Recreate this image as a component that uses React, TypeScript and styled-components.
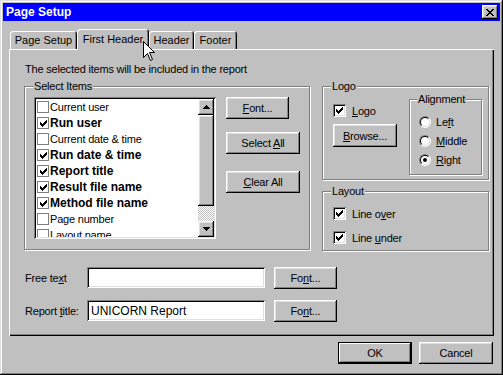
import React from "react";
import styled, { createGlobalStyle } from "styled-components";

const GlobalStyle = createGlobalStyle`
  html, body {
    margin: 0;
    padding: 0;
    background: #c0c0c0;
  }
  body {
    font-family: "Liberation Sans", Arial, sans-serif;
    font-size: 11px;
    letter-spacing: -0.2px;
    color: #000;
  }
  * {
    box-sizing: border-box;
  }
`;

const raised =
  "inset -1px -1px #000, inset 1px 1px #fff, inset -2px -2px #808080, inset 2px 2px #dfdfdf";
const sunken =
  "inset 1px 1px #808080, inset -1px -1px #fff, inset 2px 2px #000, inset -2px -2px #dfdfdf";

const items = [
  { label: "Current user", checked: false },
  { label: "Run user", checked: true },
  { label: "Current date & time", checked: false },
  { label: "Run date & time", checked: true },
  { label: "Report title", checked: true },
  { label: "Result file name", checked: true },
  { label: "Method file name", checked: true },
  { label: "Page number", checked: false },
  { label: "Layout name", checked: false },
];

const CheckMark = () => (
  <svg width="7" height="7" viewBox="0 0 7 7" shapeRendering="crispEdges">
    <path
      d="M6 0h1v1h-1z M5 1h2v1h-2z M0 2h1v1h-1z M4 2h3v1h-3z M0 3h2v1h-2z M3 3h3v1h-3z M0 4h5v1h-5z M1 5h3v1h-3z M2 6h1v1h-1z"
      fill="#000"
    />
  </svg>
);

const Arrow = ({ down }: { down?: boolean }) => (
  <svg width="7" height="4" viewBox="0 0 7 4" shapeRendering="crispEdges">
    <polygon points={down ? "0,0 7,0 3.5,4" : "3.5,0 7,4 0,4"} fill="#000" />
  </svg>
);

const App = () => {
  return (
    <>
      <GlobalStyle />
      <Window>
        <TitleBar>
          <span>Page Setup</span>
          <CloseButton>
            <svg width="8" height="7" viewBox="0 0 8 7" shapeRendering="crispEdges">
              <path
                d="M0 0h2v1h-2z M6 0h2v1h-2z M1 1h2v1h-2z M5 1h2v1h-2z M2 2h4v1h-4z M3 3h2v1h-2z M2 4h4v1h-4z M1 5h2v1h-2z M5 5h2v1h-2z M0 6h2v1h-2z M6 6h2v1h-2z"
                fill="#000"
              />
            </svg>
          </CloseButton>
        </TitleBar>

        <Body>
          <TabStrip>
            <Tab $w={67}>Page Setup</Tab>
            <Tab $w={72} $active>
              First Header
            </Tab>
            <Tab $w={45}>Header</Tab>
            <Tab $w={43}>Footer</Tab>
          </TabStrip>

          <Panel>
            <Intro>The selected items will be included in the report</Intro>

            <MainRow>
              <Group $w={286} $h={164} $pad="0 9px">
                <GroupLabel $ml={-1}>Select Items</GroupLabel>
                <ListRow>
                  <ListBox>
                    <ListItems>
                      {items.map((it) => (
                        <ListItem key={it.label} $checked={it.checked}>
                          <ListCheck>{it.checked && <CheckMark />}</ListCheck>
                          <span>{it.label}</span>
                        </ListItem>
                      ))}
                    </ListItems>
                    <ScrollBar>
                      <ScrollButton>
                        <Arrow />
                      </ScrollButton>
                      <Thumb />
                      <Track />
                      <ScrollButton>
                        <Arrow down />
                      </ScrollButton>
                    </ScrollBar>
                  </ListBox>
                  <ButtonColumn>
                    <Button $w={63}>
                      <span>
                        <u>F</u>ont...
                      </span>
                    </Button>
                    <Button $w={74} $mt={13}>
                      <span>
                        Select <u>A</u>ll
                      </span>
                    </Button>
                    <Button $w={74} $mt={17}>
                      <span>
                        <u>C</u>lear All
                      </span>
                    </Button>
                  </ButtonColumn>
                </ListRow>
              </Group>

              <RightColumn>
                <Group $w={167} $h={94} $pad="0 6px 0 10px">
                  <GroupLabel $ml={-2}>Logo</GroupLabel>
                  <LogoRow>
                    <LogoLeft>
                      <CheckRow>
                        <CheckBox>
                          <CheckMark />
                        </CheckBox>
                        <span>
                          <u>L</u>ogo
                        </span>
                      </CheckRow>
                      <Button $w={64} $h={23} $mt={7}>
                        <span>
                          <u>B</u>rowse...
                        </span>
                      </Button>
                    </LogoLeft>
                    <Group $w={73} $h={76} $pad="0 0 0 9px">
                      <GroupLabel $ml={-2}>Alignment</GroupLabel>
                      <RadioList>
                        <RadioRow>
                          <Radio>
                            <RadioInner />
                          </Radio>
                          <span>
                            Le<u>f</u>t
                          </span>
                        </RadioRow>
                        <RadioRow>
                          <Radio>
                            <RadioInner />
                          </Radio>
                          <span>
                            <u>M</u>iddle
                          </span>
                        </RadioRow>
                        <RadioRow>
                          <Radio>
                            <RadioInner>
                              <RadioDot />
                            </RadioInner>
                          </Radio>
                          <span>
                            <u>R</u>ight
                          </span>
                        </RadioRow>
                      </RadioList>
                    </Group>
                  </LogoRow>
                </Group>

                <Group $w={167} $h={60} $pad="0 10px">
                  <GroupLabel $ml={-2}>Layout</GroupLabel>
                  <LayoutChecks>
                    <CheckRow>
                      <CheckBox>
                        <CheckMark />
                      </CheckBox>
                      <span>
                        Line o<u>v</u>er
                      </span>
                    </CheckRow>
                    <CheckRow>
                      <CheckBox>
                        <CheckMark />
                      </CheckBox>
                      <span>
                        Line <u>u</u>nder
                      </span>
                    </CheckRow>
                  </LayoutChecks>
                </Group>
              </RightColumn>
            </MainRow>

            <Fields>
              <FieldRow>
                <FieldLabel>
                  Free te<u>x</u>t
                </FieldLabel>
                <TextInput />
                <Button $w={63}>
                  <span>
                    Fo<u>n</u>t...
                  </span>
                </Button>
              </FieldRow>
              <FieldRow>
                <FieldLabel>
                  Report <u>t</u>itle:
                </FieldLabel>
                <TextInput>UNICORN Report</TextInput>
                <Button $w={63}>
                  <span>
                    Fo<u>n</u>t...
                  </span>
                </Button>
              </FieldRow>
            </Fields>
          </Panel>

          <DialogButtons>
            <Button $w={74} $default>
              OK
            </Button>
            <Button $w={74}>Cancel</Button>
          </DialogButtons>
        </Body>

        <Cursor width="13" height="21" viewBox="0 0 13 21">
          <path
            d="M0.5 0.5 L0.5 16.5 L4.5 12.5 L7.5 19.5 L9.5 18.5 L6.5 11.5 L11.5 11.5 Z"
            fill="#fff"
            stroke="#000"
            strokeWidth="1"
          />
        </Cursor>
      </Window>
    </>
  );
};

export default App;

const Window = styled.div`
  position: relative;
  width: 503px;
  height: 375px;
  padding: 3px;
  background: #c0c0c0;
  box-shadow: inset -1px -1px #000, inset 1px 1px #dfdfdf, inset -2px -2px #808080,
    inset 2px 2px #fff;
  display: flex;
  flex-direction: column;
`;

const TitleBar = styled.div`
  height: 18px;
  background: #0000ff;
  color: #fff;
  font-weight: bold;
  font-size: 12px;
  letter-spacing: 0;
  display: flex;
  align-items: center;
  justify-content: space-between;
  padding: 0 2px 0 3px;
`;

const CloseButton = styled.div`
  width: 16px;
  height: 14px;
  background: #c0c0c0;
  box-shadow: ${raised};
  display: flex;
  align-items: center;
  justify-content: center;
`;

const Body = styled.div`
  padding: 8px 6px 0;
  display: flex;
  flex-direction: column;
`;

const TabStrip = styled.div`
  display: flex;
  align-items: flex-end;
  height: 20px;
  padding-left: 1px;
`;

const Tab = styled.div<{ $w: number; $active?: boolean }>`
  position: relative;
  width: ${(p) => p.$w}px;
  height: ${(p) => (p.$active ? 21 : 18)}px;
  margin-bottom: ${(p) => (p.$active ? -1 : 0)}px;
  z-index: ${(p) => (p.$active ? 1 : 0)};
  background: #c0c0c0;
  border-radius: 3px 3px 0 0;
  box-shadow: inset 1px 1px #fff, inset -1px 0 #000, inset -2px 0 #808080;
  display: flex;
  align-items: flex-start;
  justify-content: center;
  padding-top: ${(p) => (p.$active ? 4 : 3)}px;
  white-space: nowrap;
  letter-spacing: 0;
`;

const Panel = styled.div`
  width: 485px;
  height: 287px;
  padding: 14px 5px 0 15px;
  box-shadow: inset 1px 1px #fff, inset -1px -1px #000, inset -2px -2px #808080;
  display: flex;
  flex-direction: column;
`;

const Intro = styled.div`
  height: 13px;
  line-height: 13px;
  padding-left: 1px;
  margin-bottom: 10px;
`;

const MainRow = styled.div`
  display: flex;
  gap: 12px;
`;

const RightColumn = styled.div`
  display: flex;
  flex-direction: column;
  gap: 11px;
`;

const Group = styled.div<{ $w: number; $h: number; $pad: string }>`
  width: ${(p) => p.$w}px;
  height: ${(p) => p.$h}px;
  padding: ${(p) => p.$pad};
  border: 1px solid #808080;
  box-shadow: inset 1px 1px #fff, 1px 1px #fff;
  flex-shrink: 0;
`;

const GroupLabel = styled.div<{ $ml: number }>`
  width: fit-content;
  height: 13px;
  line-height: 13px;
  margin: -7px 0 0 ${(p) => p.$ml}px;
  padding: 0 1px;
  background: #c0c0c0;
  white-space: nowrap;
`;

const ListRow = styled.div`
  display: flex;
  gap: 10px;
  margin-top: 4px;
`;

const ListBox = styled.div`
  width: 185px;
  height: 142px;
  padding: 2px;
  background: #fff;
  box-shadow: ${sunken};
  display: flex;
`;

const ListItems = styled.div`
  flex: 1;
  overflow: hidden;
  padding-left: 1px;
`;

const ListItem = styled.div<{ $checked: boolean }>`
  height: 16px;
  display: flex;
  align-items: center;
  gap: 1px;
  font-size: ${(p) => (p.$checked ? 12 : 11)}px;
  font-weight: ${(p) => (p.$checked ? "bold" : "normal")};
  letter-spacing: ${(p) => (p.$checked ? 0 : -0.2)}px;
  white-space: nowrap;
`;

const ListCheck = styled.span`
  width: 12px;
  height: 12px;
  border: 1px solid #808080;
  background: #fff;
  display: flex;
  align-items: center;
  justify-content: center;
  flex-shrink: 0;
`;

const ScrollBar = styled.div`
  width: 16px;
  display: flex;
  flex-direction: column;
`;

const ScrollButton = styled.div`
  height: 16px;
  background: #c0c0c0;
  box-shadow: ${raised};
  display: flex;
  align-items: center;
  justify-content: center;
`;

const Thumb = styled.div`
  height: 91px;
  background: #c0c0c0;
  box-shadow: ${raised};
`;

const Track = styled.div`
  flex: 1;
  background: repeating-conic-gradient(#fff 0 25%, #c0c0c0 0 50%) 0 0 / 2px 2px;
`;

const ButtonColumn = styled.div`
  display: flex;
  flex-direction: column;
  align-items: flex-start;
`;

const Button = styled.div<{ $w: number; $h?: number; $mt?: number; $default?: boolean }>`
  width: ${(p) => p.$w}px;
  height: ${(p) => p.$h ?? 22}px;
  margin-top: ${(p) => p.$mt ?? 0}px;
  background: #c0c0c0;
  box-shadow: ${(p) =>
    p.$default
      ? "inset 0 0 0 1px #000, inset -2px -2px #000, inset 2px 2px #fff, inset -3px -3px #808080"
      : raised};
  display: flex;
  align-items: center;
  justify-content: center;
  flex-shrink: 0;
  white-space: nowrap;
`;

const LogoRow = styled.div`
  display: flex;
  justify-content: space-between;
  margin-top: 6px;
`;

const LogoLeft = styled.div`
  display: flex;
  flex-direction: column;
  padding-top: 5px;
`;

const CheckRow = styled.div`
  height: 13px;
  display: flex;
  align-items: center;
  gap: 6px;
  white-space: nowrap;
`;

const CheckBox = styled.span`
  width: 13px;
  height: 13px;
  background: #fff;
  box-shadow: ${sunken};
  display: flex;
  align-items: center;
  justify-content: center;
  flex-shrink: 0;
`;

const RadioList = styled.div`
  margin-top: 6px;
`;

const RadioRow = styled.div`
  height: 19px;
  display: flex;
  align-items: center;
  gap: 5px;
`;

const Radio = styled.span`
  width: 12px;
  height: 12px;
  border-radius: 50%;
  border: 1px solid;
  border-color: #808080 #fff #fff #808080;
  flex-shrink: 0;
`;

const RadioInner = styled.span`
  width: 10px;
  height: 10px;
  border-radius: 50%;
  border: 1px solid;
  border-color: #000 #dfdfdf #dfdfdf #000;
  background: #fff;
  display: flex;
  align-items: center;
  justify-content: center;
`;

const RadioDot = styled.span`
  width: 4px;
  height: 4px;
  border-radius: 50%;
  background: #000;
`;

const LayoutChecks = styled.div`
  display: flex;
  flex-direction: column;
  gap: 11px;
  margin-top: 9px;
`;

const Fields = styled.div`
  display: flex;
  flex-direction: column;
  gap: 11px;
  margin-top: 16px;
`;

const FieldRow = styled.div`
  display: flex;
  align-items: flex-start;
  height: 22px;
`;

const FieldLabel = styled.div`
  width: 63px;
  padding-left: 1px;
  line-height: 22px;
  white-space: nowrap;
`;

const TextInput = styled.div`
  width: 178px;
  height: 21px;
  margin-right: 9px;
  padding: 0 4px;
  background: #fff;
  box-shadow: ${sunken};
  display: flex;
  align-items: center;
  font-size: 12px;
  letter-spacing: 0;
`;

const DialogButtons = styled.div`
  display: flex;
  justify-content: flex-end;
  gap: 7px;
  margin-top: 6px;
  padding-right: 1px;
`;

const Cursor = styled.svg`
  position: absolute;
  left: 143px;
  top: 41px;
  z-index: 5;
`;
